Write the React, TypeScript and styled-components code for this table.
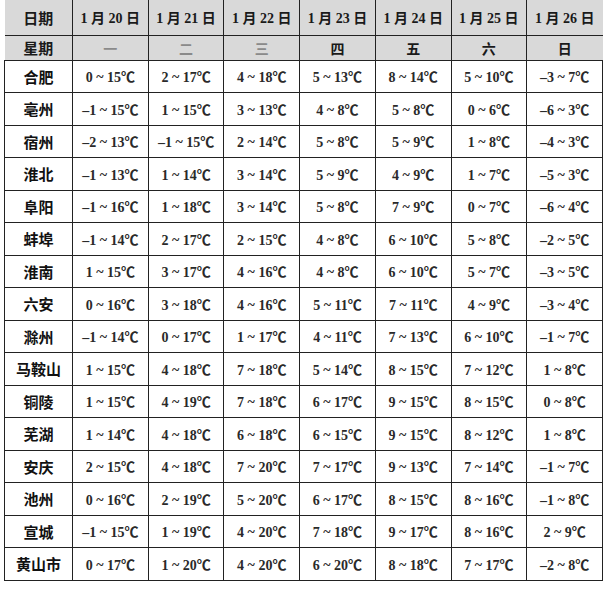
import React from "react";
import styled, { createGlobalStyle } from "styled-components";

const GlobalStyle = createGlobalStyle`
  html, body {
    margin: 0;
    padding: 0;
    background: #ffffff;
  }
`;

const Page = styled.div`
  width: 612px;
  height: 592px;
  padding: 0 0 0 4px;
  box-sizing: border-box;
  background: #ffffff;
`;

const Table = styled.table`
  width: 599px;
  border-collapse: collapse;
  table-layout: fixed;
  font-family: "Liberation Serif", "Noto Sans CJK SC", serif;
  color: #1a1a1a;
`;

const HeadRow = styled.tr<{ $h: number }>`
  height: ${(p) => p.$h}px;
  background: #d9d9d9;
`;

const HeadCell = styled.th<{ $light?: boolean }>`
  border-left: 1.5px solid #222;
  border-bottom: 1.5px solid #222;
  padding: 0;
  font-size: 14px;
  font-weight: 700;
  text-align: center;
  color: ${(p) => (p.$light ? "#8a8a8a" : "#1a1a1a")};
  font-family: "Liberation Serif", "Noto Sans CJK SC", serif;

  &:first-child {
    border-left: none;
    font-family: "Noto Sans CJK SC", sans-serif;
    font-size: 15px;
  }
`;

const Row = styled.tr`
  height: 32.5px;
`;

const NameCell = styled.td`
  border: 1.5px solid #222;
  padding: 0;
  text-align: center;
  font-family: "Noto Sans CJK SC", sans-serif;
  font-weight: 700;
  font-size: 15px;
  color: #111;
`;

const TempCell = styled.td`
  border: 1.5px solid #222;
  padding: 0;
  text-align: center;
  font-size: 14px;
  font-weight: 700;
  color: #2a2a2a;
  white-space: nowrap;
`;

const dates = ["20", "21", "22", "23", "24", "25", "26"];
const weekdays = ["一", "二", "三", "四", "五", "六", "日"];

const rows: [string, string[]][] = [
  ["合肥", ["0 ~ 15℃", "2 ~ 17℃", "4 ~ 18℃", "5 ~ 13℃", "8 ~ 14℃", "5 ~ 10℃", "–3 ~ 7℃"]],
  ["亳州", ["–1 ~ 15℃", "1 ~ 15℃", "3 ~ 13℃", "4 ~ 8℃", "5 ~ 8℃", "0 ~ 6℃", "–6 ~ 3℃"]],
  ["宿州", ["–2 ~ 13℃", "–1 ~ 15℃", "2 ~ 14℃", "5 ~ 8℃", "5 ~ 9℃", "1 ~ 8℃", "–4 ~ 3℃"]],
  ["淮北", ["–1 ~ 13℃", "1 ~ 14℃", "3 ~ 14℃", "5 ~ 9℃", "4 ~ 9℃", "1 ~ 7℃", "–5 ~ 3℃"]],
  ["阜阳", ["–1 ~ 16℃", "1 ~ 18℃", "3 ~ 14℃", "5 ~ 8℃", "7 ~ 9℃", "0 ~ 7℃", "–6 ~ 4℃"]],
  ["蚌埠", ["–1 ~ 14℃", "2 ~ 17℃", "2 ~ 15℃", "4 ~ 8℃", "6 ~ 10℃", "5 ~ 8℃", "–2 ~ 5℃"]],
  ["淮南", ["1 ~ 15℃", "3 ~ 17℃", "4 ~ 16℃", "4 ~ 8℃", "6 ~ 10℃", "5 ~ 7℃", "–3 ~ 5℃"]],
  ["六安", ["0 ~ 16℃", "3 ~ 18℃", "4 ~ 16℃", "5 ~ 11℃", "7 ~ 11℃", "4 ~ 9℃", "–3 ~ 4℃"]],
  ["滁州", ["–1 ~ 14℃", "0 ~ 17℃", "1 ~ 17℃", "4 ~ 11℃", "7 ~ 13℃", "6 ~ 10℃", "–1 ~ 7℃"]],
  ["马鞍山", ["1 ~ 15℃", "4 ~ 18℃", "7 ~ 18℃", "5 ~ 14℃", "8 ~ 15℃", "7 ~ 12℃", "1 ~ 8℃"]],
  ["铜陵", ["1 ~ 15℃", "4 ~ 19℃", "7 ~ 18℃", "6 ~ 17℃", "9 ~ 15℃", "8 ~ 15℃", "0 ~ 8℃"]],
  ["芜湖", ["1 ~ 14℃", "4 ~ 18℃", "6 ~ 18℃", "6 ~ 15℃", "9 ~ 15℃", "8 ~ 12℃", "1 ~ 8℃"]],
  ["安庆", ["2 ~ 15℃", "4 ~ 18℃", "7 ~ 20℃", "7 ~ 17℃", "9 ~ 13℃", "7 ~ 14℃", "–1 ~ 7℃"]],
  ["池州", ["0 ~ 16℃", "2 ~ 19℃", "5 ~ 20℃", "6 ~ 17℃", "8 ~ 15℃", "8 ~ 16℃", "–1 ~ 8℃"]],
  ["宣城", ["–1 ~ 15℃", "1 ~ 19℃", "4 ~ 20℃", "7 ~ 18℃", "9 ~ 17℃", "8 ~ 16℃", "2 ~ 9℃"]],
  ["黄山市", ["0 ~ 17℃", "1 ~ 20℃", "4 ~ 20℃", "6 ~ 20℃", "8 ~ 18℃", "7 ~ 17℃", "–2 ~ 8℃"]],
];

const App = () => {
  return (
    <Page>
      <GlobalStyle />
      <Table>
        <colgroup>
          <col style={{ width: 68 }} />
          {dates.map((d) => (
            <col key={d} />
          ))}
        </colgroup>
        <thead>
          <HeadRow $h={35}>
            <HeadCell>日期</HeadCell>
            {dates.map((d) => (
              <HeadCell key={d}>1 月 {d} 日</HeadCell>
            ))}
          </HeadRow>
          <HeadRow $h={25}>
            <HeadCell>星期</HeadCell>
            {weekdays.map((w, i) => (
              <HeadCell key={w} $light={i < 3}>
                {w}
              </HeadCell>
            ))}
          </HeadRow>
        </thead>
        <tbody>
          {rows.map(([name, temps]) => (
            <Row key={name}>
              <NameCell>{name}</NameCell>
              {temps.map((t, i) => (
                <TempCell key={i}>{t}</TempCell>
              ))}
            </Row>
          ))}
        </tbody>
      </Table>
    </Page>
  );
};

export default App;
